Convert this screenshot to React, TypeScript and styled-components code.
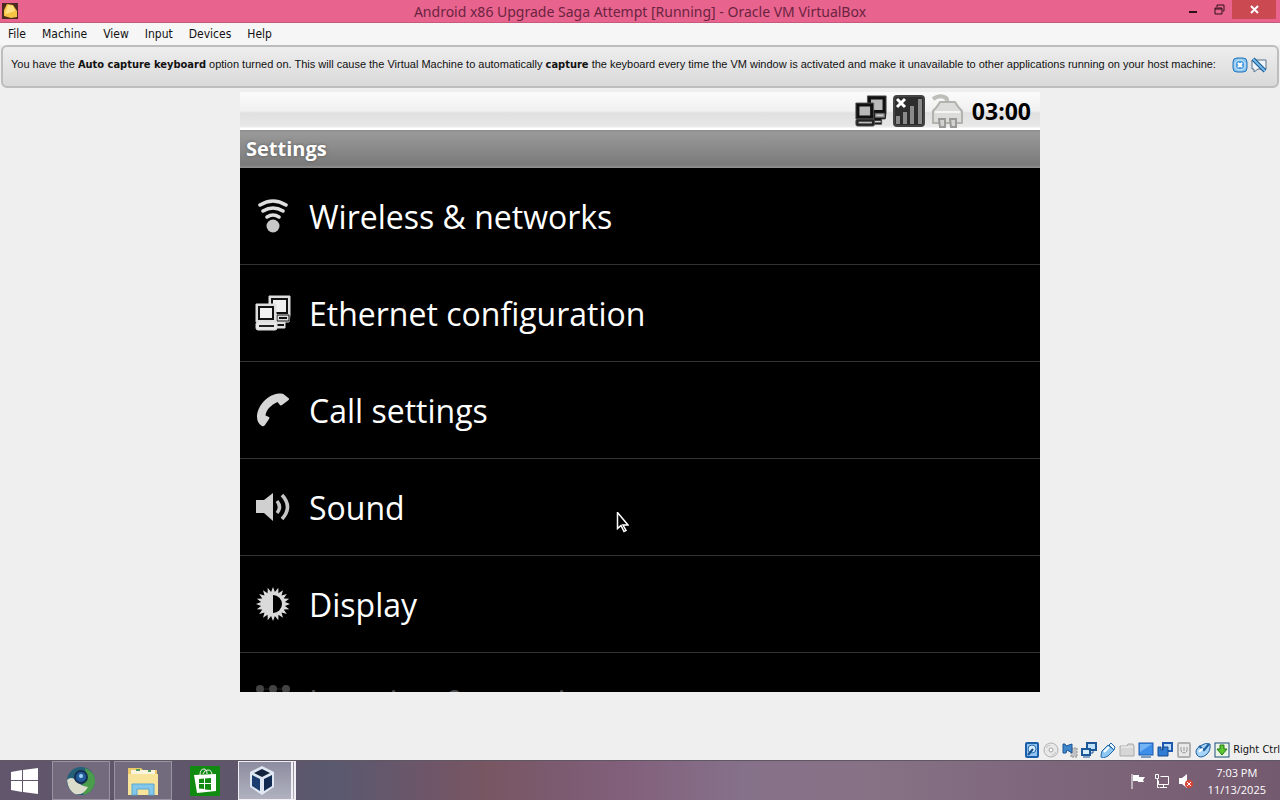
import React from 'react';
import styled, { createGlobalStyle } from 'styled-components';

const Global = createGlobalStyle`
  *, *::before, *::after { box-sizing: border-box; }
  body { margin: 0; background: #efefef; font-family: "DejaVu Sans Condensed", "DejaVu Sans", sans-serif; }
  button { font: inherit; color: inherit; background: none; border: 0; padding: 0; margin: 0; }
  ul { list-style: none; margin: 0; padding: 0; }
  svg { display: block; flex: none; }
`;

const Desktop = styled.div`
  display: flex;
  flex-direction: column;
  min-height: 100vh;
`;

const TitleBar = styled.header`
  display: grid;
  grid-template-columns: 120px 1fr 120px;
  align-items: center;
  height: 23px;
  background: #e8648f;
  border-bottom: 1px solid #c45a7c;
`;

const AppIcon = styled.div`
  padding-left: 2px;
`;

const WindowTitle = styled.h1`
  margin: 0;
  padding-top: 2px;
  text-align: center;
  font: 400 14px/20px "Noto Sans", sans-serif;
  color: #6b2340;
  white-space: nowrap;
`;

const WindowControls = styled.div`
  display: flex;
  justify-content: flex-end;
  align-self: start;
  padding-right: 4px;
`;

const ControlButton = styled.button<{ $close?: boolean }>`
  display: flex;
  align-items: center;
  justify-content: center;
  width: ${(p) => (p.$close ? 44 : 26)}px;
  height: 19px;
  background: ${(p) => (p.$close ? '#cb4a52' : 'transparent')};
`;

const MenuBar = styled.nav`
  display: flex;
  gap: 16px;
  height: 22px;
  padding: 0 8px;
  background: #f6f6f6;
`;

const MenuItem = styled.button`
  font-size: 12px;
  line-height: 22px;
  color: #111;
`;

const Notice = styled.section`
  display: flex;
  align-items: center;
  justify-content: space-between;
  height: 43px;
  margin: 0 1px;
  padding: 0 10px 4px 8px;
  border: 2px solid #bdbdbd;
  border-radius: 6px;
  background: linear-gradient(#eeeeee, #d9d9d9);
`;

const NoticeText = styled.p`
  margin: 0;
  font: 400 11px/16px "Liberation Sans", Arial, sans-serif;
  color: #111;
  white-space: nowrap;

  b { font-family: "DejaVu Sans Condensed", sans-serif; }
`;

const NoticeActions = styled.div`
  display: flex;
  gap: 3px;
`;

const Workspace = styled.main`
  flex: 1;
  display: flex;
  justify-content: center;
  align-items: flex-start;
  padding: 4px 0;
`;

const Guest = styled.div`
  position: relative;
  display: flex;
  flex-direction: column;
  width: 100%;
  max-width: 800px;
  aspect-ratio: 4 / 3;
  overflow: hidden;
  background: #000;
  font-family: "Open Sans", sans-serif;
`;

const StatusBar = styled.div`
  display: flex;
  flex: none;
  align-items: center;
  justify-content: flex-end;
  gap: 6px;
  height: 38px;
  padding-right: 9px;
  background: linear-gradient(#fbfbfb, #f0f0f0 50%, #e0e0e0 55%, #e8e8e8 90%, #fff 96%);
`;

const GuestClock = styled.time`
  margin-left: 2px;
  font-size: 23px;
  line-height: 38px;
  font-weight: 700;
  color: #000;
`;

const GuestTitle = styled.h2`
  flex: none;
  margin: 0;
  height: 38px;
  padding: 0 6px;
  font-size: 20px;
  line-height: 38px;
  font-weight: 700;
  color: #fff;
  text-shadow: 0 0 3px #555;
  background: linear-gradient(#8e8e8e, #999 8%, #7a7a7a 92%, #929292);
`;

const SettingsList = styled.ul`
  flex: 1;
  min-height: 0;
`;

const SettingsRow = styled.li`
  height: 97px;
  border-bottom: 1px solid #333;
`;

const SettingsButton = styled.button<{ $dim?: boolean }>`
  display: flex;
  align-items: center;
  gap: 18px;
  width: 100%;
  height: 96px;
  padding: 0 15px;
  text-align: left;
  color: #fff;
  opacity: ${(p) => (p.$dim ? 0.3 : 1)};
`;

const SettingsLabel = styled.span`
  padding-top: 2px;
  font-size: 32px;
  line-height: 44px;
`;

const Pointer = styled.svg`
  position: absolute;
  left: 47%;
  top: 70%;
`;

const VmStatus = styled.footer`
  display: flex;
  align-items: center;
  justify-content: flex-end;
  gap: 3px;
  height: 20px;
`;

const HostKey = styled.span`
  font-size: 11px;
  line-height: 20px;
  color: #111;
`;

const Taskbar = styled.footer`
  display: flex;
  align-items: stretch;
  justify-content: space-between;
  height: 40px;
  border-top: 1px solid #5f5862;
  background: linear-gradient(90deg, #61566c 0%, #5e566b 22%, #59596f 26%, #6d5669 33%, #785662 38%, #7c5b71 44%, #82607c 49%, #86718a 58%, #867185 68%, #7f687d 80%, #745a6f 100%);
`;

const TaskButtons = styled.div`
  display: flex;
  gap: 4px;
`;

const TaskButton = styled.button<{ $look?: 'open' | 'active' }>`
  display: flex;
  align-items: center;
  justify-content: center;
  width: 58px;
  padding-right: ${(p) => (p.$look === 'active' ? 6 : 0)}px;
  border: 1px solid ${(p) => (p.$look === 'active' ? '#f1eff3' : p.$look === 'open' ? '#9a93a3' : 'transparent')};
  border-right-width: ${(p) => (p.$look === 'active' ? 5 : 1)}px;
  border-right-style: ${(p) => (p.$look === 'active' ? 'double' : 'solid')};
  background: ${(p) => (p.$look === 'active' ? 'linear-gradient(#8d8ca0, #b0b2c0)' : p.$look === 'open' ? 'rgba(255,255,255,.12)' : 'none')};
`;

const StartButton = styled(TaskButton)`
  width: 48px;
`;

const Tray = styled.div`
  display: flex;
  align-items: center;
  gap: 8px;
  padding-right: 14px;
`;

const TrayClock = styled.time`
  margin-left: 6px;
  text-align: center;
  font: 400 11px/17px "Open Sans", sans-serif;
  color: #fff;
`;

const NetworkIcon = ({ size, dark }: { size: number; dark?: boolean }) => {
  const edge = dark ? '#555' : '#dedede';
  const body = dark ? '#111' : '#dedede';
  const line = '#111';
  const screen = dark ? '#b9b9b9' : '#f0f0f0';
  return (
    <svg width={size} height={size} viewBox="0 0 36 36">
      <path d="M14 1h21v19l-1 7h-4v6H18v-6h-4z" fill={body} stroke={edge} />
      <path d="M17 4h15v14H17z" fill={screen} stroke={line} strokeWidth="2" />
      <path d="M22 20h12v6H22z" fill={dark ? '#888' : body} stroke={line} />
      <path d="M24 23h8M22 30h7" stroke={dark ? '#ccc' : line} strokeWidth="2" />
      <path d="M1 9h20v18H1z" fill={body} stroke={edge} />
      <path d="M4 12h14v12H4z" fill={screen} stroke={line} strokeWidth="2" />
      <rect x="1" y="27" width="21" height="8" rx="2" fill={dark ? '#222' : '#e6e6e6'} stroke={edge} />
      <path d="M4 31h15" stroke={dark ? '#bbb' : '#222'} strokeWidth="2" />
    </svg>
  );
};

const SignalIcon = () => (
  <svg width="32" height="32" viewBox="0 0 32 32">
    <rect x="1" y="1" width="30" height="30" rx="3" fill="#2d2d2d" stroke="#444" strokeWidth="2" />
    <path d="M5 21v8M12 17v12M19 11v18M27 4v25" stroke="#8a8a8a" strokeWidth="4" />
    <path d="M4 4l8 8M12 4l-8 8" stroke="#fff" strokeWidth="3" />
  </svg>
);

const BatteryIcon = () => (
  <svg width="33" height="36" viewBox="0 0 33 36">
    <path d="M2 6q6-4 11-2 4 1 3 6" fill="none" stroke="#bdbdb9" strokeWidth="4" />
    <path d="M9 9h15q2 4 7 9v12H2V18q5-5 7-9z" fill="#dcdcd8" stroke="#b2b2ae" strokeWidth="2" strokeLinejoin="round" />
    <path d="M4 19h25" stroke="#f5f5f5" strokeWidth="2" />
    <path d="M8 26h6v8H9zM19 26h6v8h-5z" fill="#d2d2ce" stroke="#999995" strokeWidth="2" />
  </svg>
);

const WirelessIcon = () => (
  <svg width="36" height="36" viewBox="0 0 36 36">
    <circle cx="18" cy="28" r="6.500" fill="#c8c8c8" />
    <g fill="none" stroke="#dedede" strokeWidth="3.500" strokeLinecap="round">
      <path d="M5 7q13-8 26 0M8 13q10-6 20 0M12 19q6-4 12 0" />
    </g>
  </svg>
);

const CallIcon = () => (
  <svg width="36" height="36" viewBox="0 0 36 36">
    <path d="M2 25C2 14 13 2 24 1.500q4-.5 5 1l5 4q.5 1-1 2l-6 4.500q-1.500 1-2.500-.5l-2-2.500C16 13 11 18 10.500 23.500l3.500 1.500q1 .5 0 2l-4 6q-1.500 2-3 1c-3-1.500-5-5-5-9z" fill="#d6d6d6" />
  </svg>
);

const SoundIcon = () => (
  <svg width="36" height="36" viewBox="0 0 36 36">
    <path d="M1 11h8l9-7v28l-9-8H1z" fill="#d0d0d0" />
    <path d="M22 12q5 6 0 12M27 6q11 12 0 24" fill="none" stroke="#c6c6c6" strokeWidth="3.500" />
  </svg>
);

const rays = Array.from({ length: 40 }, (_, i) => {
  const a = (i * Math.PI) / 20;
  const r = i % 2 ? 12 : 17;
  return `${(18 + r * Math.sin(a)).toFixed(1)},${(18 - r * Math.cos(a)).toFixed(1)}`;
}).join(' ');

const DisplayIcon = () => (
  <svg width="36" height="36" viewBox="0 0 36 36">
    <polygon points={rays} fill="#dadada" />
    <path d="M18 9a9 9 0 0 1 0 18z" fill="#000" />
  </svg>
);

const LocationIcon = () => (
  <svg width="36" height="36" viewBox="0 0 36 36" fill="#ddd">
    {[6, 18, 30].map((y) => (
      <g key={y}>
        <path d={`M5 ${y}h26`} stroke="#777" />
        {[5, 18, 31].map((x) => (
          <circle key={x} cx={x} cy={y} r="4" />
        ))}
      </g>
    ))}
  </svg>
);

const settings = [
  { label: 'Wireless & networks', icon: <WirelessIcon /> },
  { label: 'Ethernet configuration', icon: <NetworkIcon size={36} /> },
  { label: 'Call settings', icon: <CallIcon /> },
  { label: 'Sound', icon: <SoundIcon /> },
  { label: 'Display', icon: <DisplayIcon /> },
  { label: 'Location & security', icon: <LocationIcon />, dim: true },
];

const Frame = ({ children }: { children: React.ReactNode }) => (
  <svg width="16" height="16" viewBox="0 0 16 16">{children}</svg>
);

const VmIndicators = () => (
  <>
    <Frame>
      <rect x="2" y="1" width="12" height="14" rx="1" fill="#8fc4f2" stroke="#1c5fa8" strokeWidth="2" />
      <circle cx="8" cy="7" r="4" fill="#d7edff" stroke="#2a6cb0" />
      <path d="M4 13l5-6" stroke="#174f8c" strokeWidth="2" />
    </Frame>
    <Frame>
      <circle cx="8" cy="8" r="7" fill="#e8e8e8" stroke="#b0b0b0" />
      <circle cx="8" cy="8" r="2" fill="#fff" stroke="#a2a2a2" />
      <path d="M3 6q2-3 4-3M13 10q-2 3-4 3" stroke="#c2c2c2" fill="none" />
    </Frame>
    <Frame>
      <path d="M9 6h6v9H9z" fill="#c2c2c2" stroke="#929292" strokeDasharray="2 1" />
      <path d="M1 2h2l1 2 6-2v9L5 8 4 11H1z" fill="#3f86cc" stroke="#1b5592" />
    </Frame>
    <Frame>
      <path d="M6 1h9v7H6z" fill="#bfe0fa" stroke="#1d5796" strokeWidth="2" />
      <path d="M1 7h8v6H1z" fill="#d8edfc" stroke="#1d5796" strokeWidth="2" />
      <path d="M2 15h7M12 8v3h-2" stroke="#1d5796" fill="none" />
    </Frame>
    <Frame>
      <path d="M2 9l6-6 6 5-6 6q-6 3-7 1 0-3 1-6z" fill="#8ec8f3" stroke="#2068ab" />
      <path d="M9 3l2-2 4 4-1 3z" fill="#eaf5fd" stroke="#2068ab" />
      <path d="M4 10l5-5" stroke="#fff" strokeWidth="2" />
    </Frame>
    <Frame>
      <path d="M1 4h7l1-2h5l1 2v10H1z" fill="#d6d6d6" stroke="#ababab" />
      <path d="M2 5h12" stroke="#f5f5f5" />
    </Frame>
    <Frame>
      <rect x="1" y="1" width="14" height="12" fill="#3d8ee8" stroke="#1c58b0" />
      <path d="M2 2h12L2 10z" fill="#74b4f5" />
      <path d="M3 15h10" stroke="#7c9cc0" strokeWidth="2" />
    </Frame>
    <Frame>
      <path d="M6 1h9v8H6z" fill="#bcdcf8" stroke="#1c58b0" strokeWidth="2" />
      <path d="M1 5h3v3h2V5h5v9H1z" fill="#2f7cd4" stroke="#164a8d" />
    </Frame>
    <Frame>
      <rect x="2" y="1" width="12" height="14" rx="1" fill="#e8e8e8" stroke="#b0b0b0" strokeWidth="2" />
      <path d="M5 5v4q3 4 6 0V5M8 5v4" fill="none" stroke="#999" />
    </Frame>
    <Frame>
      <path d="M2 13Q-1 8 5 4t10-2q1 7-4 11-6 4-9 0z" fill="#a5d4f6" stroke="#1d5b9d" />
      <path d="M4 4l5 4 5-6" fill="none" stroke="#1d5b9d" strokeWidth="2" />
      <path d="M4 10q2-3 4-3" fill="none" stroke="#fff" strokeWidth="2" />
    </Frame>
    <Frame>
      <rect x="1" y="1" width="14" height="14" fill="#eaf5e4" stroke="#1d4f7c" />
      <path d="M6 3h4v4h3l-5 6-5-6h3z" fill="#5bc82f" stroke="#28751a" />
    </Frame>
  </>
);

const Vbox = () => (
  <svg width="30" height="32" viewBox="0 0 30 32">
    <path d="M15 1l12 6v15l-12 8L3 22V7z" fill="#dfe7f2" />
    <path d="M15 4l8 4-8 4-8-4z" fill="#14233d" />
    <path d="M5 10l8 4v12l-8-5z" fill="#1c3d70" />
    <path d="M25 10l-8 4v12l8-5z" fill="#112a52" />
  </svg>
);

export default function App() {
  return (
    <Desktop>
      <Global />
      <TitleBar>
        <AppIcon>
          <svg width="16" height="16" viewBox="0 0 16 16">
            <path d="M0 0h16v16H0z" fill="#4b2a20" />
            <path d="M5 1l6 1 4 6v6l-6 1-7-2V7z" fill="#f6c445" />
            <path d="M6 2l5 1 2 5-6 2-4 1z" fill="#ffe184" />
          </svg>
        </AppIcon>
        <WindowTitle>Android x86 Upgrade Saga Attempt [Running] - Oracle VM VirtualBox</WindowTitle>
        <WindowControls>
          <ControlButton aria-label="Minimize">
            <svg width="10" height="10" viewBox="0 0 10 10"><path d="M1 7h8" stroke="#2c1019" strokeWidth="2" /></svg>
          </ControlButton>
          <ControlButton aria-label="Restore">
            <svg width="11" height="11" viewBox="0 0 11 11"><path d="M3 3V1h7v6H9M1 4h7v6H1zM1 5h7" fill="none" stroke="#2c1019" /></svg>
          </ControlButton>
          <ControlButton $close aria-label="Close">
            <svg width="9" height="9" viewBox="0 0 9 9"><path d="M1 1l7 7M8 1L1 8" stroke="#fff" strokeWidth="2" /></svg>
          </ControlButton>
        </WindowControls>
      </TitleBar>
      <MenuBar>
        {['File', 'Machine', 'View', 'Input', 'Devices', 'Help'].map((m) => (
          <MenuItem key={m}>{m}</MenuItem>
        ))}
      </MenuBar>
      <Notice>
        <NoticeText>
          You have the <b>Auto capture keyboard</b> option turned on. This will cause the Virtual Machine to automatically <b>capture</b> the keyboard every time the VM window is activated and make it unavailable to other applications running on your host machine:
        </NoticeText>
        <NoticeActions>
          <button aria-label="Dismiss">
            <svg width="16" height="16" viewBox="0 0 16 16">
              <rect x="1" y="1" width="14" height="14" rx="4" fill="#8cc6f3" stroke="#2172b5" />
              <circle cx="8" cy="8" r="5" fill="#4d9ddd" stroke="#dff1ff" />
              <path d="M6 6l4 4M10 6l-4 4" stroke="#fff" strokeWidth="2" />
            </svg>
          </button>
          <button aria-label="Do not show again">
            <svg width="16" height="16" viewBox="0 0 16 16">
              <path d="M1 3h14v9H7l-4 3v-3H1z" fill="#f0f4f8" stroke="#56738e" />
              <path d="M2 2l12 12" stroke="#1b578e" strokeWidth="4" />
              <path d="M2 2l12 12" stroke="#73bcf0" strokeWidth="2" />
            </svg>
          </button>
        </NoticeActions>
      </Notice>
      <Workspace>
        <Guest>
          <StatusBar>
            <NetworkIcon size={32} dark />
            <SignalIcon />
            <BatteryIcon />
            <GuestClock>03:00</GuestClock>
          </StatusBar>
          <GuestTitle>Settings</GuestTitle>
          <SettingsList>
            {settings.map((s) => (
              <SettingsRow key={s.label}>
                <SettingsButton $dim={s.dim}>
                  {s.icon}
                  <SettingsLabel>{s.label}</SettingsLabel>
                </SettingsButton>
              </SettingsRow>
            ))}
          </SettingsList>
          <Pointer width="13" height="21" viewBox="0 0 13 21">
            <path d="M1.500 .5v16l3.500-3 3 6 2-1-3-5.500h5z" fill="#000" stroke="#fff" strokeWidth="1.500" />
          </Pointer>
        </Guest>
      </Workspace>
      <VmStatus>
        <VmIndicators />
        <HostKey>Right Ctrl</HostKey>
      </VmStatus>
      <Taskbar>
        <TaskButtons>
          <StartButton aria-label="Start">
            <svg width="27" height="26" viewBox="0 0 27 26" fill="#fff">
              <path d="M0 4l11-2v10H0zM12 2l15-2v12H12zM0 13h11v11L0 22zM12 13h15v13l-15-2z" />
            </svg>
          </StartButton>
          <TaskButton $look="open" aria-label="Browser">
            <svg width="32" height="32" viewBox="0 0 32 32">
              <circle cx="16" cy="16" r="14" fill="#256079" />
              <path d="M20 3q11 4 10 15-2 9-11 12l-3-8 6-9z" fill="#4c9d4b" />
              <path d="M2 15q4-4 9 0 4 6 12 7-5 9-13 7Q3 25 2 15z" fill="#dcdccb" />
              <circle cx="16" cy="12" r="6" fill="#225c9c" stroke="#153052" strokeWidth="2" />
              <circle cx="16" cy="11" r="2" fill="#9fd2f7" />
            </svg>
          </TaskButton>
          <TaskButton $look="open" aria-label="File Explorer">
            <svg width="32" height="30" viewBox="0 0 32 30">
              <path d="M1 2h13l2 2h14v25H1z" fill="#ebc968" />
              <path d="M4 4h24v4H4z" fill="#faf4dc" />
              <path d="M9 4h4M21 5h3" stroke="#4e9c5c" strokeWidth="2" />
              <path d="M1 8h30v21H1z" fill="#f7e39a" />
              <path d="M5 29V18h22v11h-5v-6H10v6z" fill="#83c8ea" stroke="#5aa6cf" />
            </svg>
          </TaskButton>
          <TaskButton aria-label="Store">
            <svg width="30" height="30" viewBox="0 0 30 30">
              <path d="M0 0h30v30H0z" fill="#108a10" />
              <path d="M10 9q0-6 4-6 3 0 3 5M13 8q1-4 5-4 4 0 4 5" fill="none" stroke="#f3f3f3" strokeWidth="1" />
              <path d="M4 9l22-1v17L7 27z" fill="#fff" />
              <path d="M9 13l5-.5V17H9zM15 12.500l6-.5v5h-6zM9 18h5v5l-5-.5zM15 18h6v6l-6-.5z" fill="#108a10" />
            </svg>
          </TaskButton>
          <TaskButton $look="active" aria-label="VirtualBox"><Vbox /></TaskButton>
        </TaskButtons>
        <Tray>
          <svg width="16" height="16" viewBox="0 0 16 16">
            <path d="M2 1v15" stroke="#fff" />
            <path d="M3 2h6v2h6l-2 3 1 2H8V8H3z" fill="#fff" />
          </svg>
          <svg width="16" height="16" viewBox="0 0 16 16" fill="none" stroke="#fff">
            <path d="M6.500 3.500h8v8h-10v-4M9.500 11v3M6 14.500h7M1.500 1.500h3v4h-3zM3.500 6v8.500h2" />
          </svg>
          <svg width="16" height="16" viewBox="0 0 16 16">
            <path d="M1 5h3l5-4v14l-5-4H1z" fill="#fff" />
            <circle cx="11" cy="11" r="4" fill="#d8453a" />
            <path d="M9 9l4 4M13 9l-4 4" stroke="#fff" />
          </svg>
          <TrayClock>7:03 PM<br />11/13/2025</TrayClock>
        </Tray>
      </Taskbar>
    </Desktop>
  );
}
